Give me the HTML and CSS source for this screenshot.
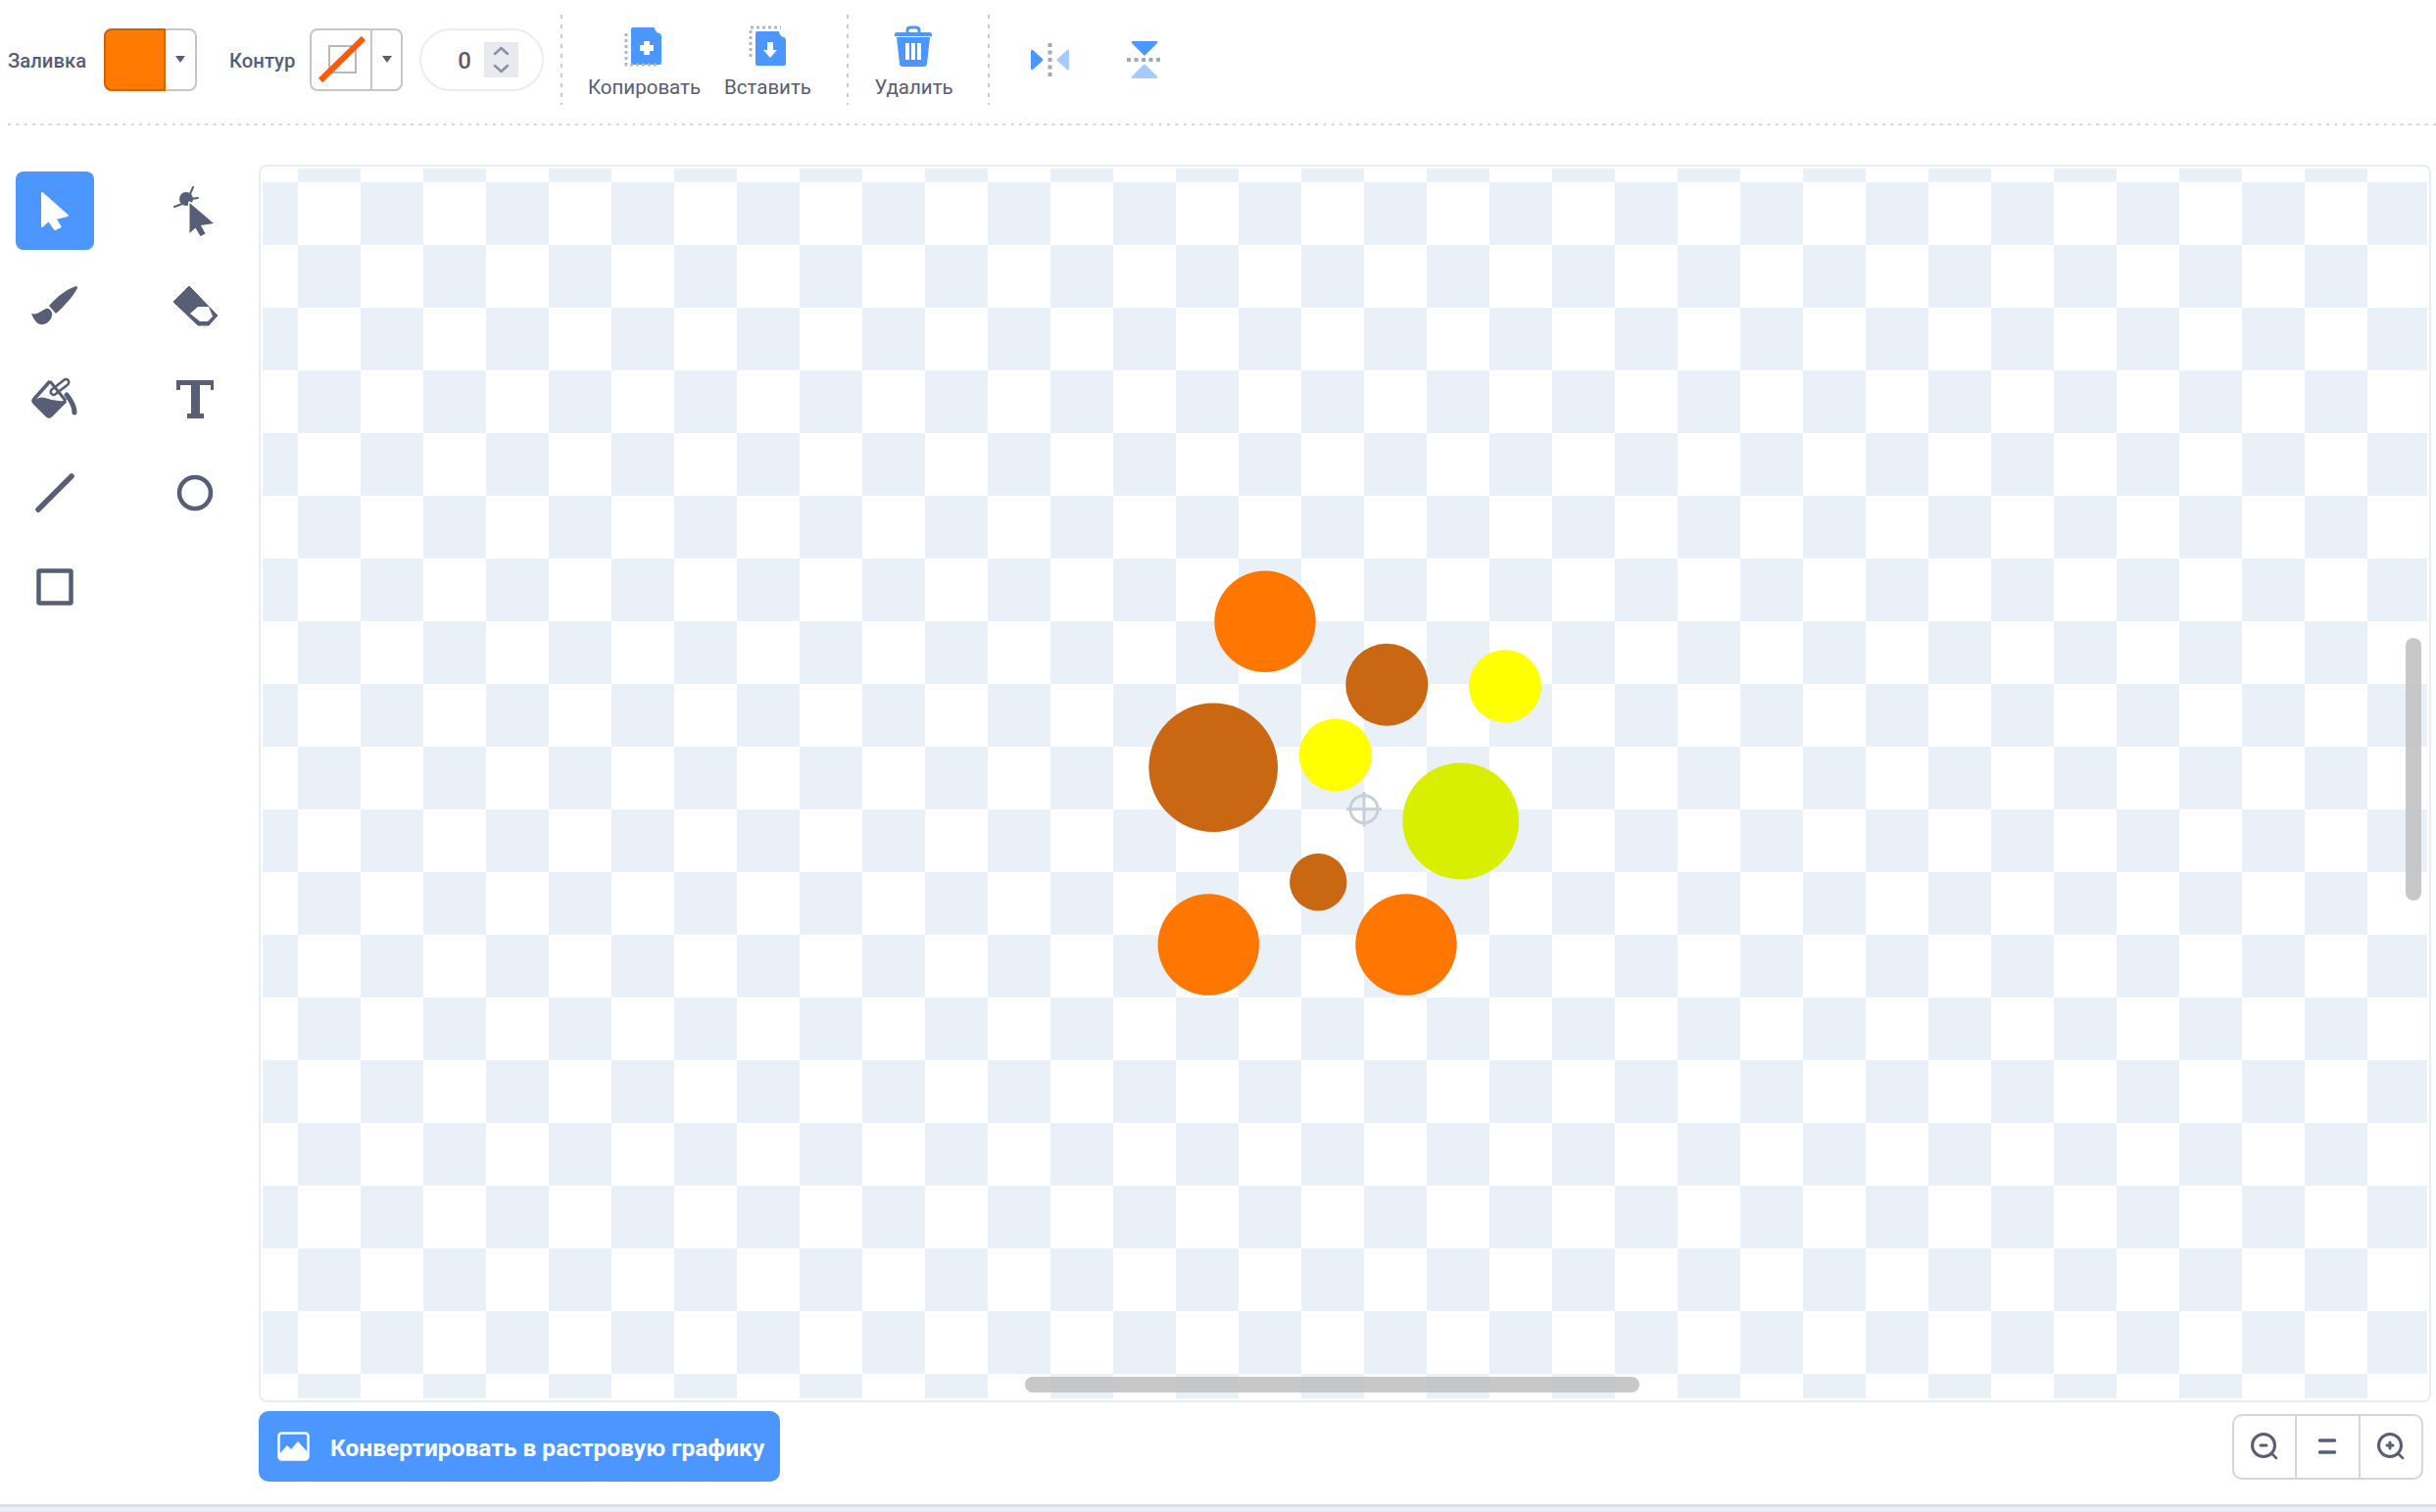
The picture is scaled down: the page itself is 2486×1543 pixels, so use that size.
FILE: index.html
```html
<!DOCTYPE html>
<html lang="ru">
<head>
    <meta charset="UTF-8">
    <meta name="viewport" content="width=device-width, initial-scale=1.0">
    <title>Редактор костюмов</title>
    <link rel="stylesheet" href="styles.css">
</head>
<body>
    <div class="editor">
        <div class="toolbar">
            <span class="field-label fill-label">Заливка</span>
            <div class="swatch fill-swatch">
                <div class="swatch-color"></div>
                <div class="swatch-arrow"></div>
            </div>
            <span class="field-label outline-label">Контур</span>
            <div class="swatch outline-swatch">
                <div class="swatch-color">
                    <svg class="no-outline" width="62" height="64" viewBox="0 0 62 64">
                        <rect x="18" y="18" width="27" height="27" fill="none" stroke="#b9b9b9" stroke-width="2"/>
                        <line x1="9" y1="53" x2="53" y2="10" stroke="#ff5a0a" stroke-width="6"/>
                    </svg>
                </div>
                <div class="swatch-arrow"></div>
            </div>
            <div class="number-pill">
                <span class="number-value">0</span>
                <div class="stepper">
                    <svg width="35" height="36" viewBox="0 0 35 36" fill="none" stroke="#8b90a2" stroke-width="2.5" stroke-linecap="round" stroke-linejoin="round">
                        <path d="M11 12 L17.5 6 L24 12"/>
                        <path d="M11 24 L17.5 30 L24 24"/>
                    </svg>
                </div>
            </div>
            <div class="separator first-separator"></div>
            <div class="action copy-action">
                <svg width="48" height="44" viewBox="0 0 48 44">
                    <path d="M12 2 H34 L41 9 V38 Q41 40 39 40 H12 Q10 40 10 38 V4 Q10 2 12 2 Z" fill="#4c97ff"/>
                    <path d="M33 1 Q33 9 42 10 V7 L36 1 Z" fill="#fff"/>
                    <path d="M33 2 Q34 8 40 9" fill="none" stroke="#4c97ff" stroke-width="1.5"/>
                    <path d="M23 16 H29 V20 H33 V26 H29 V30 H23 V26 H19 V20 H23 Z" fill="#fff"/>
                    <path d="M5 8 V40 H38" fill="none" stroke="#b3b6c2" stroke-width="3" stroke-dasharray="3 3"/>
                </svg>
                <span>Копировать</span>
            </div>
            <div class="action paste-action">
                <svg width="48" height="44" viewBox="0 0 48 44">
                    <path d="M13 6 H35 L42 13 V39 Q42 41 40 41 H13 Q11 41 11 39 V8 Q11 6 13 6 Z" fill="#4c97ff"/>
                    <path d="M34 5 Q34 13 43 14 V11 L37 5 Z" fill="#fff"/>
                    <path d="M34 6 Q35 12 41 13" fill="none" stroke="#4c97ff" stroke-width="1.5"/>
                    <path d="M23 17 H29 V25 H33 L26 33 L19 25 H23 Z" fill="#fff"/>
                    <path d="M6 32 V2 H37" fill="none" stroke="#b3b6c2" stroke-width="3" stroke-dasharray="3 3"/>
                </svg>
                <span>Вставить</span>
            </div>
            <div class="separator paste-separator"></div>
            <div class="action delete-action">
                <svg width="48" height="44" viewBox="0 0 48 44">
                    <path d="M17 8 V5 Q17 2 20 2 H26 Q29 2 29 5 V8" fill="none" stroke="#4c97ff" stroke-width="3"/>
                    <path d="M6 7 H40 Q42 7 42 9 V11 H4 V9 Q4 7 6 7 Z" fill="#4c97ff"/>
                    <path d="M6 12 H40 L37 39 Q37 42 33 42 H13 Q9 42 9 39 Z" fill="#4c97ff"/>
                    <path d="M15 18 H19 V35 H15 Z M21 18 H25 V35 H21 Z M27 18 H31 V35 H27 Z" fill="#fff"/>
                </svg>
                <span>Удалить</span>
            </div>
            <div class="separator delete-separator"></div>
            <svg class="flip flip-h" width="39" height="38" viewBox="0 0 39 38">
                <path d="M2 9 Q0 8 0 10 V28 Q0 30 2 29 L12 20 Q13 19 12 18 Z" fill="#4c97ff"/>
                <path d="M37 9 Q39 8 39 10 V28 Q39 30 37 29 L27 20 Q26 19 27 18 Z" fill="#a6cbff"/>
                <line x1="19.5" y1="2" x2="19.5" y2="37" stroke="#a5a8b6" stroke-width="4" stroke-dasharray="4 3.5"/>
            </svg>
            <svg class="flip flip-v" width="38" height="40" viewBox="0 0 38 40">
                <path d="M7 1 H31 Q33 1 32 3 L20 15 Q19 16 18 15 L6 3 Q5 1 7 1 Z" fill="#4c97ff"/>
                <path d="M7 39 H31 Q33 39 32 37 L20 25 Q19 24 18 25 L6 37 Q5 39 7 39 Z" fill="#a6cbff"/>
                <line x1="1" y1="20" x2="37" y2="20" stroke="#a5a8b6" stroke-width="4" stroke-dasharray="4 3.5"/>
            </svg>
        </div>
        <div class="toolbar-rule"></div>

        <div class="workspace">
            <div class="tools">
                <div class="tool tool-active">
                    <svg width="48" height="48" viewBox="0 0 48 48">
                        <path d="M11 6 V40 L17.5 34 L24 43 L29.5 40.5 L24.5 32 L37 29 Z" fill="#fff" stroke="#fff" stroke-width="2" stroke-linejoin="round"/>
                    </svg>
                </div>
                <div class="tool">
                    <svg width="48" height="48" viewBox="0 0 48 48">
                        <path d="M3 20 L11 17 M22 0 L19 7 M20 12 L27 11" stroke="#575e75" stroke-width="2" stroke-linecap="round" fill="none"/>
                        <circle cx="15" cy="12" r="7" fill="#575e75"/>
                        <path d="M18.5 16 V47 L24.5 41.5 L29.5 50 L34.5 47.5 L30 39 L43 37 Z" fill="#575e75" stroke="#fff" stroke-width="3" stroke-linejoin="round" paint-order="stroke"/>
                    </svg>
                </div>
                <div class="tool">
                    <svg width="48" height="48" viewBox="0 0 48 48">
                        <path d="M46 5 C38 7 28 14 18 25 L25 33 C34 25 43 15 47 7 Q47 5 46 5 Z" fill="#575e75"/>
                        <path d="M0 33 C6 35 10 30 15 28 C18 27 22 31 21 35 C20 41 14 45 9 44 C5 43 2 38 0 33 Z" fill="#575e75"/>
                    </svg>
                </div>
                <div class="tool">
                    <svg width="48" height="48" viewBox="0 0 48 48">
                        <path d="M18 5 L2 21 L27 45 H38 L47 35 Z" fill="#575e75" stroke="#575e75" stroke-width="1" stroke-linejoin="round"/>
                        <path d="M27 26 L19 33 L29 41 H37 L42 36 L38 26 Z" fill="#fff"/>
                    </svg>
                </div>
                <div class="tool">
                    <svg width="48" height="48" viewBox="0 0 48 48">
                        <path d="M19 6 L3 24 Q1 26 3 28 L16 41 Q18 43 20 41 L35 26" fill="none" stroke="#575e75" stroke-width="3.5" stroke-linejoin="round"/>
                        <path d="M19 6 L35 26" fill="none" stroke="#575e75" stroke-width="3"/>
                        <path d="M3 26 Q8 21 14 23 Q24 27 34 26 L18 42 Z" fill="#575e75"/>
                        <rect x="18" y="9" width="22" height="6" rx="3" transform="rotate(-38 29 12)" fill="none" stroke="#575e75" stroke-width="2.5"/>
                        <path d="M36 20 Q44 30 44 38" fill="none" stroke="#575e75" stroke-width="5" stroke-linecap="round"/>
                    </svg>
                </div>
                <div class="tool">
                    <svg width="48" height="48" viewBox="0 0 48 48">
                        <path d="M5 5 H43 V15 H40 V10 H29 V39 H33 V44 H16 V39 H20 V10 H9 V15 H5 Z" fill="#575e75"/>
                    </svg>
                </div>
                <div class="tool">
                    <svg width="48" height="48" viewBox="0 0 48 48">
                        <line x1="7" y1="41" x2="41" y2="7" stroke="#575e75" stroke-width="5.5" stroke-linecap="round"/>
                    </svg>
                </div>
                <div class="tool">
                    <svg width="48" height="48" viewBox="0 0 48 48">
                        <circle cx="24" cy="24" r="16" fill="none" stroke="#575e75" stroke-width="4.5"/>
                    </svg>
                </div>
                <div class="tool">
                    <svg width="48" height="48" viewBox="0 0 48 48">
                        <rect x="7.5" y="7.5" width="33" height="33" rx="1" fill="none" stroke="#575e75" stroke-width="4.5"/>
                    </svg>
                </div>
            </div>

            <div class="stage">
                <div class="canvas">
                    <div class="canvas-area">
                        <svg class="drawing" width="2210" height="1255" viewBox="268 172 2210 1255">
                            <circle cx="1291" cy="634.3" r="51.7" fill="#ff7700"/>
                            <circle cx="1415.3" cy="698.7" r="42" fill="#c96712"/>
                            <circle cx="1536" cy="700.3" r="37" fill="#ffff00"/>
                            <circle cx="1238.2" cy="783.2" r="65.8" fill="#c96712"/>
                            <circle cx="1362.8" cy="770.5" r="37" fill="#ffff00"/>
                            <circle cx="1490.7" cy="837.8" r="59.4" fill="#d9ef00"/>
                            <circle cx="1345.3" cy="900.2" r="29.2" fill="#c96712"/>
                            <circle cx="1233.3" cy="964" r="51.7" fill="#ff7700"/>
                            <circle cx="1435" cy="964" r="51.7" fill="#ff7700"/>
                            <g fill="none" stroke="#c9cfd9" stroke-width="3">
                                <circle cx="1392" cy="825.7" r="14"/>
                                <path d="M1374 825.7 H1410 M1392 808 V843.5"/>
                            </g>
                        </svg>
                        <div class="scrollbar scrollbar-h"></div>
                        <div class="scrollbar scrollbar-v"></div>
                    </div>
                </div>
                <div class="stage-footer">
                    <div class="convert-button">
                        <svg width="33" height="30" viewBox="0 0 33 30">
                            <rect x="1.5" y="1.5" width="30" height="27" rx="3" fill="none" stroke="#fff" stroke-width="2.5"/>
                            <path d="M2 27 V23 L10 14 L14 18 L21 10 L31 21 V27 Q31 28 30 28 H3 Q2 28 2 27 Z" fill="#fff"/>
                        </svg>
                        <span class="convert-text">Конвертировать в растровую графику</span>
                    </div>
                    <div class="zoom-group">
                        <div class="zoom-button">
                            <svg width="32" height="32" viewBox="0 0 32 32" fill="none" stroke="#575e75" stroke-width="3" stroke-linecap="round">
                                <circle cx="15" cy="15" r="11.5"/>
                                <path d="M23.5 23.5 L28 28" stroke-width="2.5"/>
                                <path d="M12 15 H18"/>
                            </svg>
                        </div>
                        <div class="zoom-button">
                            <svg width="32" height="32" viewBox="0 0 32 32" fill="none" stroke="#575e75" stroke-width="3.5" stroke-linecap="round">
                                <path d="M8.5 10 H23.5 M8.5 22 H23.5"/>
                            </svg>
                        </div>
                        <div class="zoom-button">
                            <svg width="32" height="32" viewBox="0 0 32 32" fill="none" stroke="#575e75" stroke-width="3" stroke-linecap="round">
                                <circle cx="15" cy="15" r="11.5"/>
                                <path d="M23.5 23.5 L28 28" stroke-width="2.5"/>
                                <path d="M12 15 H18 M15 12 V18"/>
                            </svg>
                        </div>
                    </div>
                </div>
            </div>
        </div>
        <div class="page-end"></div>
    </div>
</body>
</html>
```

FILE: styles.css
```css
html, body { margin: 0; height: 100%; background: #fff; }
body { font-family: Roboto, "Noto Sans", sans-serif; color: #575e75; }
.editor { height: 100vh; display: flex; flex-direction: column; overflow: hidden; }

/* top toolbar */
.toolbar { height: 122px; display: flex; align-items: center; padding-left: 8px; flex: none; }
.toolbar-rule { height: 2px; margin: 4px 0 0 8px; flex: none; background-image: linear-gradient(90deg, #d3d5da 3px, transparent 0); background-size: 8.4px 2px; }
.field-label { font-size: 20.3px; font-weight: 500; white-space: nowrap; margin-top: 2px; }
.fill-label { width: 81px; }
.outline-label { width: 66px; margin-left: 33px; }

.swatch { width: 95px; height: 64px; box-sizing: border-box; border: 2px solid #c6c6c6; border-radius: 8px; display: flex; flex: none; }
.fill-swatch { margin-left: 17px; }
.outline-swatch { margin-left: 16px; }
.swatch-color { width: 62px; flex: none; box-sizing: border-box; }
.fill-swatch .swatch-color { width: 63px; background: #ff7a00; border: 2px solid #cc6200; margin: -2px 0 -2px -2px; border-radius: 8px 0 0 8px; }
.outline-swatch .swatch-color { border-right: 2px solid #c6c6c6; }
.no-outline { display: block; margin-top: -2px; }
.swatch-arrow { flex: 1; position: relative; }
.swatch-arrow::after { content: ""; position: absolute; left: 50%; top: 50%; margin: -4px 0 0 -5px; border: 5px solid transparent; border-top: 7px solid #575e75; border-bottom: 0; }

.number-pill { width: 127px; height: 64px; margin-left: 17px; box-sizing: border-box; border: 2px solid #e9eef2; border-radius: 32px; display: flex; align-items: center; flex: none; position: relative; }
.number-value { width: 64px; padding-left: 24px; box-sizing: border-box; text-align: center; font-size: 24px; font-weight: 500; margin-top: 1px; }
.stepper { width: 35px; height: 36px; background: #e9eaf0; }
.stepper svg { display: block; }

.separator { width: 2px; height: 92px; flex: none; background-image: linear-gradient(180deg, #c9ccd2 4px, transparent 0); background-size: 2px 10px; }
.first-separator { margin-left: 17px; }
.paste-separator { margin-left: 36px; }
.delete-separator { margin-left: 36px; }

.action { display: flex; flex-direction: column; align-items: center; height: 76px; margin-top: 6px; font-size: 20.5px; white-space: nowrap; flex: none; }
.action svg { margin-bottom: 7px; flex: none; }
.copy-action { width: 115px; margin-left: 26px; }
.paste-action { width: 89px; margin-left: 24px; }
.delete-action { width: 79px; margin-left: 27px; }
.flip { flex: none; }
.flip-h { margin-left: 42px; }
.flip-v { margin-left: 58px; }

/* tools + stage */
.workspace { flex: 1; min-height: 0; display: flex; padding: 40px 5px 23px 0; }
.tools { width: 264px; flex: none; box-sizing: border-box; padding: 7px 0 0 16px; display: grid; grid-template-columns: 80px 80px; grid-auto-rows: 80px; column-gap: 63px; row-gap: 16px; align-content: start; }
.tool { display: flex; align-items: center; justify-content: center; border-radius: 8px; }
.tool svg { overflow: visible; }
.tool-active { background: #4c97ff; }

.stage { flex: 1; min-width: 0; display: flex; flex-direction: column; }
.canvas { flex: 1; min-height: 0; box-sizing: border-box; border: 2px solid #e8edf3; border-radius: 8px; padding: 2px; background: #fff; }
.canvas-area { position: relative; height: 100%; overflow: hidden; background-image: conic-gradient(#e9f0f8 25%, #fff 0 50%, #e9f0f8 0 75%, #fff 0); background-size: 128px 128px; background-position: 36px 14px; }
.drawing { display: block; }
.scrollbar { position: absolute; background: rgba(190, 190, 190, 0.85); border-radius: 8px; }
.scrollbar-h { left: 778px; top: 1233px; width: 627px; height: 16px; }
.scrollbar-v { left: 2187px; top: 479px; width: 16px; height: 268px; }

.stage-footer { display: flex; justify-content: space-between; align-items: center; margin-top: 9px; height: 72px; padding-right: 8px; flex: none; }
.convert-button { width: 532px; height: 72px; box-sizing: border-box; background: #4c97ff; border-radius: 10px; color: #fff; display: flex; align-items: center; padding-left: 19px; gap: 21px; font-size: 24.5px; font-weight: 700; white-space: nowrap; }
.convert-text { margin-top: 3px; }
.zoom-group { display: flex; width: 195px; height: 67px; box-sizing: border-box; border: 2px solid #d6d6d6; border-radius: 10px; }
.zoom-button { flex: 1; display: flex; align-items: center; justify-content: center; }
.zoom-button + .zoom-button { border-left: 2px solid #d6d6d6; }

.page-end { height: 8px; box-sizing: border-box; flex: none; border-top: 3px solid #dcdfe4; background: #e8f0fd; }
```
